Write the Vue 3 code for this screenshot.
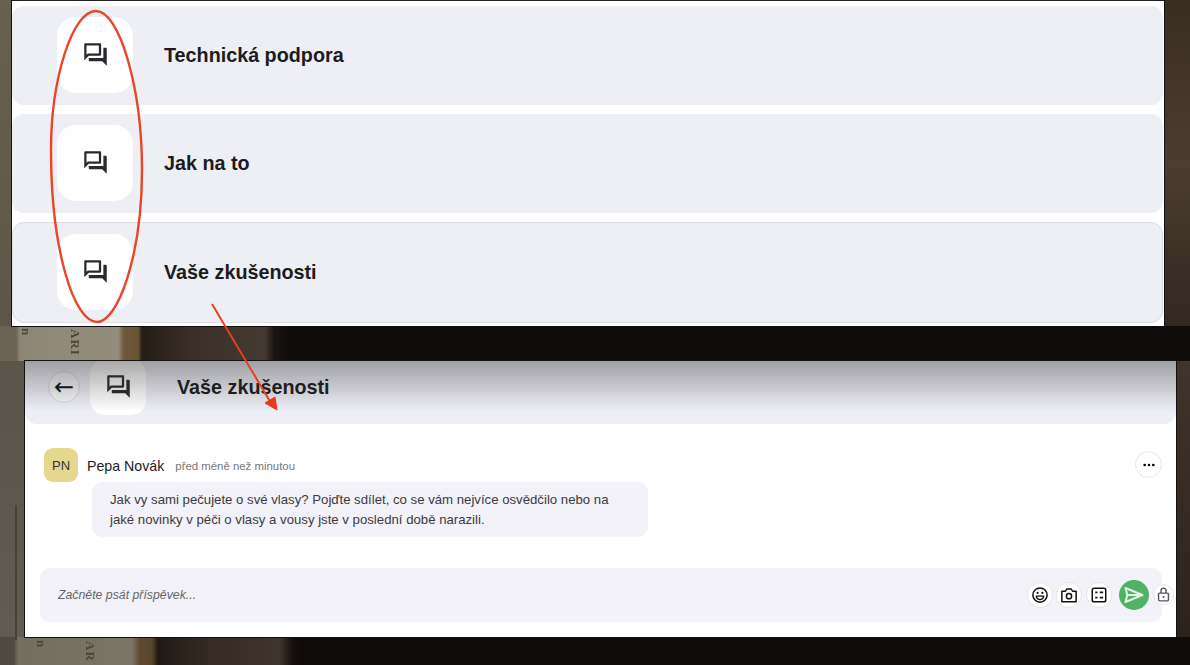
<template>
  <div class="page">
    <span v-for="s in spines" :key="s.cls" class="spine" :class="s.cls">{{ s.text }}</span>

    <section class="panel panel-top">
      <div v-for="room in rooms" :key="room.title" class="room" :class="{ active: room.active }">
        <div class="room-tile">
          <svg class="chat-icon" viewBox="0 0 24 24"><path :d="chatPath" /></svg>
        </div>
        <div class="room-title">{{ room.title }}</div>
      </div>
    </section>

    <section class="panel panel-bottom">
      <header class="head">
        <button class="back">←</button>
        <div class="head-tile">
          <svg class="chat-icon" viewBox="0 0 24 24"><path :d="chatPath" /></svg>
        </div>
        <div class="room-title">Vaše zkušenosti</div>
      </header>

      <div class="post">
        <div class="post-top">
          <div class="avatar">PN</div>
          <span class="name">Pepa Novák</span>
          <span class="time">před méně než minutou</span>
          <button class="more">
            <svg viewBox="0 0 24 24" width="16" height="16"><circle cx="5.5" cy="12" r="2" /><circle cx="12" cy="12" r="2" /><circle cx="18.5" cy="12" r="2" /></svg>
          </button>
        </div>
        <div class="bubble">
          Jak vy sami pečujete o své vlasy? Pojďte sdílet, co se vám nejvíce osvědčilo nebo na<br />
          jaké novinky v péči o vlasy a vousy jste v poslední době narazili.
        </div>
      </div>

      <div class="composer">
        <span class="placeholder">Začněte psát příspěvek...</span>
        <div class="tools">
          <button class="tool">
            <svg viewBox="0 0 24 24" class="line"><circle cx="12" cy="12" r="9.500" /><path d="M7 13.500c.6 3 2.600 4.500 5 4.500s4.400-1.500 5-4.500z" stroke-width="1.800" stroke-linejoin="round" /><circle cx="8.800" cy="9" r="1.500" fill="#111" stroke="none" /><circle cx="15.200" cy="9" r="1.500" fill="#111" stroke="none" /></svg>
          </button>
          <button class="tool">
            <svg viewBox="0 0 24 24" class="line"><path d="M2.500 7h4.800L9 4h6l1.700 3h4.800v14h-19z" stroke-linejoin="round" /><circle cx="12" cy="13.500" r="3.500" /></svg>
          </button>
          <button class="tool">
            <svg viewBox="0 0 24 24" class="line"><rect x="3" y="3" width="18" height="18" rx="2.500" /><path d="M7 8.500h3M7 15.500h3M13 8.500h4.500M13 15.500h4.500" stroke-width="2.400" /></svg>
          </button>
          <button class="send">
            <svg viewBox="0 0 24 24" width="24" height="24"><path d="M3.500 5l17 7-17 7 1.800-7zM5.300 12h15" fill="none" stroke="#e4f3e6" stroke-width="2" stroke-linejoin="round" /></svg>
          </button>
          <button class="lock">
            <svg viewBox="0 0 24 24" width="17" height="17"><rect x="5" y="10" width="14" height="11" rx="1.500" fill="none" stroke="#555" stroke-width="2" /><path d="M8.500 10V6.500a3.500 3.500 0 0 1 7 0V10" fill="none" stroke="#555" stroke-width="2" /><circle cx="12" cy="15.500" r="1.500" fill="#555" /></svg>
          </button>
        </div>
      </div>
    </section>

    <svg class="marks" viewBox="0 0 1190 665">
      <path d="M96 11C120 11 142 90 142 170C142 255 118 322 97 322C74 322 51 250 51 150C51 80 72 11 96 11Z" fill="none" stroke="#ea4529" stroke-width="2.400" />
      <path d="M212 304L271 403" fill="none" stroke="#e93e20" stroke-width="2" />
      <path d="M277 410L265 403L275 397Z" fill="#e9381c" stroke="#e9381c" />
    </svg>
  </div>
</template>

<script setup>
const chatPath = 'M15 4v7H5.170L4 12.170V4h11m1-2H3c-.55 0-1 .45-1 1v14l4-4h10c.55 0 1-.45 1-1V3c0-.55-.45-1-1-1zm5 4h-2v9H6v2c0 .55.45 1 1 1h11l4 4V7c0-.55-.45-1-1-1z'

const rooms = [
  { title: 'Technická podpora' },
  { title: 'Jak na to' },
  { title: 'Vaše zkušenosti', active: true },
]

// lettering on the book spines in the photo behind the windows
const spines = [
  { cls: 's1', text: 'n' },
  { cls: 's2', text: 'ARI' },
  { cls: 's3', text: 'n' },
  { cls: 's4', text: 'AR' },
]
</script>

<style>
html, body {
  margin: 0;
  background: #0e0b0a;
}
</style>

<style scoped>
.page {
  position: relative;
  width: 1190px;
  height: 665px;
  overflow: hidden;
  font-family: "Liberation Sans", Arial, sans-serif;
  color: #1c1c20;
  background:
    linear-gradient(#474038, #474038) 15px 505px / 2px 135px no-repeat,
    linear-gradient(90deg, #6a6355 0, #6a6355 16px, #8d8676 20px, #948d7c 118px, #6e5a3c 124px, #6a5433 138px, #241c16 142px, #3a2f27 190px, #453a30 265px, #1a1512 274px, #0e0b0a 290px) 0 326px / 300px 35px no-repeat,
    linear-gradient(90deg, #4f4940 0, #4f4940 14px, #746e60 18px, #7b7566 132px, #5e4a30 140px, #58452d 152px, #201914 158px, #352b24 210px, #3f352c 280px, #16110f 292px, #0e0b0a 300px) 0 637px / 300px 28px no-repeat,
    linear-gradient(#3a2d22, #4a3c30 50%, #33281f) 1163px 0 / 27px 326px no-repeat,
    linear-gradient(#66604f, #5e5749) 0 0 / 12px 326px no-repeat,
    linear-gradient(#5b5449, #625b4f) 0 361px / 25px 276px no-repeat,
    linear-gradient(#41342a, #2c221a) 1176px 361px / 14px 276px no-repeat,
    #0e0b0a;
}

.spine {
  position: absolute;
  font-family: "Liberation Serif", serif;
  font-size: 13px;
  font-weight: 700;
  letter-spacing: 1px;
  line-height: 14px;
  color: #4c463c;
  transform: rotate(90deg);
  transform-origin: left top;
  filter: blur(0.6px);
}

.s1 { left: 33px; top: 328px; }
.s2 { left: 82px; top: 329px; }
.s3 { left: 48px; top: 640px; }
.s4 { left: 97px; top: 641px; }

button {
  padding: 0;
  border: 1px solid #e6e6ea;
  background: #fff;
  display: flex;
  align-items: center;
  justify-content: center;
  border-radius: 50%;
  color: #111;
}

.panel {
  position: relative;
  box-sizing: border-box;
  background: #fff;
  width: 1152px;
  outline: 1px solid #111;
}

.panel-top {
  height: 326px;
  margin-left: 12px;
  padding: 5px 1px 0 0;
  border-top: 1px solid #222;
  display: flex;
  flex-direction: column;
  gap: 9px;
}

.room {
  box-sizing: border-box;
  height: 99px;
  display: flex;
  align-items: center;
  gap: 31px;
  padding-left: 45px;
  background: #eeeff5;
  border-radius: 12px;
}

.room.active {
  height: 101px;
  border: 1px solid #dcdce3;
  padding-left: 44px;
}

.room-tile {
  width: 76px;
  height: 76px;
  margin-top: -1px;
  border-radius: 19px;
  background: #fff;
  display: flex;
  align-items: center;
  justify-content: center;
}

.chat-icon {
  width: 27px;
  height: 27px;
  margin: -1px 0 0 1px;
  fill: #2a2a2e;
}

.room-title {
  font-size: 19.750px;
  font-weight: 700;
  color: #1c1c20;
}

.panel-bottom {
  height: 276px;
  margin: 35px 0 0 25px;
  width: 1151px;
  overflow: hidden;
}

.head {
  position: relative;
  box-sizing: border-box;
  height: 63px;
  display: flex;
  align-items: center;
  gap: 10px;
  padding: 0 0 11px 23px;
  background: #eeeff6;
  border-radius: 0 0 12px 12px;
}

.head::after {
  content: "";
  position: absolute;
  inset: 0;
  background: linear-gradient(rgba(40, 40, 40, 0.4), rgba(40, 40, 40, 0) 80%);
  pointer-events: none;
}

.back {
  flex: none;
  width: 32px;
  height: 32px;
  font-size: 24px;
  line-height: 1;
  font-family: "DejaVu Sans", sans-serif;
  background: #f6f6f8;
  border-color: #d8d8dc;
}

.head-tile {
  flex: none;
  width: 56px;
  height: 56px;
  margin-right: 21px;
  border-radius: 15px;
  background: #fff;
  display: flex;
  align-items: center;
  justify-content: center;
}

.post {
  padding: 24px 14px 0 19px;
}

.post-top {
  display: flex;
  align-items: center;
  height: 34px;
}

.avatar {
  width: 34px;
  height: 34px;
  border-radius: 9px;
  background: #e5d78e;
  display: flex;
  align-items: center;
  justify-content: center;
  font-size: 13px;
  color: #333;
  margin-right: 9px;
}

.name {
  font-size: 14.200px;
  color: #222;
  margin: 2px 11px 0 0;
}

.time {
  font-size: 11.400px;
  margin-top: 2px;
  color: #777;
}

.more {
  width: 27px;
  height: 27px;
  margin-left: auto;
  margin-top: -1px;
}

.bubble {
  margin: 0 0 0 48px;
  width: 520px;
  padding: 8px 18px;
  height: 39px;
  font-size: 13.200px;
  line-height: 20px;
  color: #3a3a3e;
  background: #f2f2f8;
  border-radius: 10px;
}

.composer {
  margin: 31px 14px 0 15px;
  height: 54px;
  display: flex;
  align-items: center;
  justify-content: space-between;
  background: #f2f2f8;
  border-radius: 10px;
  padding-left: 18px;
}

.placeholder {
  font-size: 12.300px;
  font-style: italic;
  color: #666;
}

.tools {
  display: flex;
  align-items: center;
  gap: 3.500px;
  margin-right: -12px;
}

.tool {
  width: 26px;
  height: 26px;
  box-sizing: border-box;
}

.tool svg {
  width: 18px;
  height: 18px;
}

.line {
  fill: none;
  stroke: #111;
  stroke-width: 2;
}

.send {
  width: 30px;
  height: 30px;
  margin: 0 1px 0 3.500px;
  border: none;
  background: #50b264;
}

.lock {
  width: 21px;
  height: 21px;
  margin-top: -2px;
}

.marks {
  position: absolute;
  inset: 0;
  width: 1190px;
  height: 665px;
  pointer-events: none;
}
</style>
